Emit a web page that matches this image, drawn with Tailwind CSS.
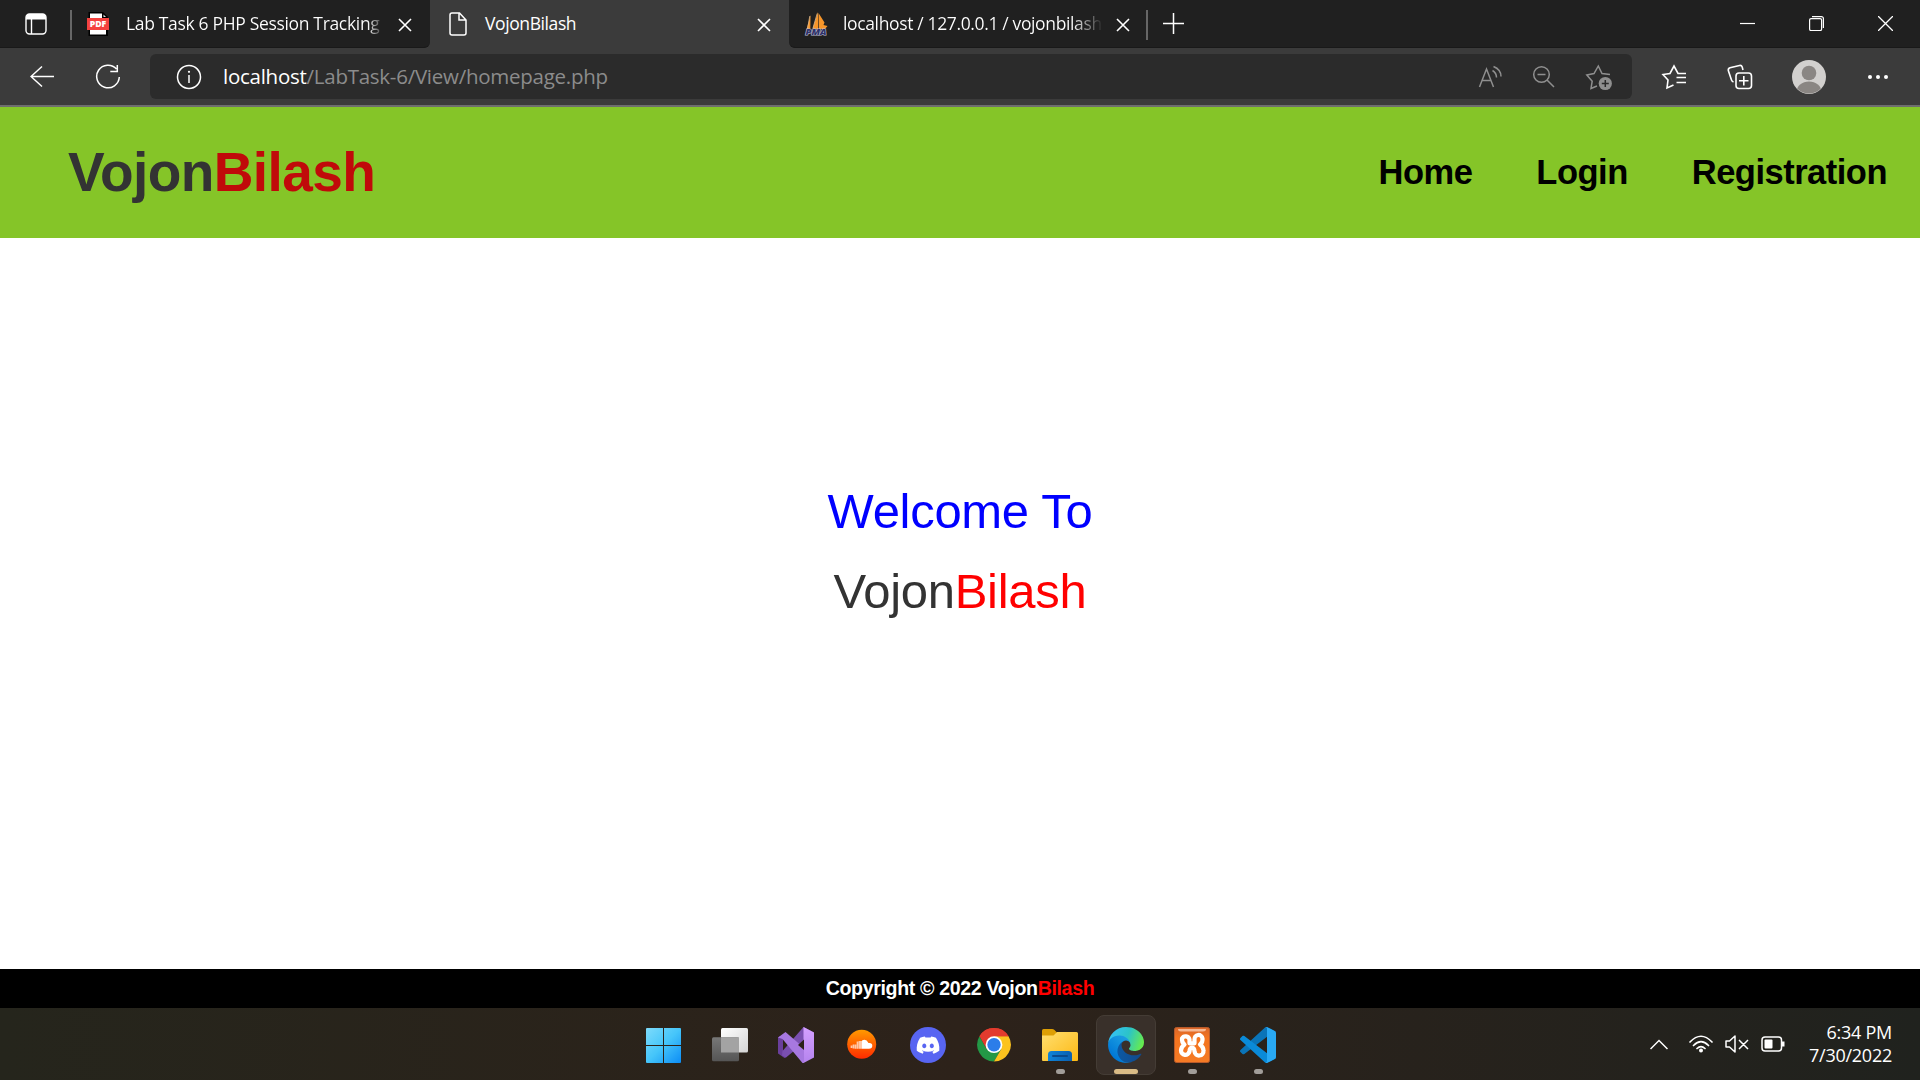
<!DOCTYPE html>
<html lang="en">
<head>
<meta charset="utf-8">
<title>VojonBilash</title>
<script src="https://cdn.jsdelivr.net/npm/@tailwindcss/browser@4"></script>
</head>
<body class="flex h-[1080px] w-[1920px] flex-col overflow-hidden bg-white font-['Liberation_Sans',Arial,sans-serif]">

<!-- Tab strip -->
<div class="flex h-12 shrink-0 bg-[#3b3b3b] font-['Open_Sans','Noto_Sans',sans-serif] text-white">
  <div class="flex h-12 w-[430px] items-center rounded-br-md border-b border-[#191919] bg-[#202020]">
    <svg class="ml-[25px] h-[22px] w-[22px]" viewBox="0 0 22 22" fill="none" stroke="#fff" stroke-width="1.4"><rect x="1" y="1" width="20" height="20" rx="3.5"/><path d="M1 4.5A3.5 3.5 0 0 1 4.500 1h13A3.500 3.500 0 0 1 21 4.500V6.500H1z" fill="#fff" stroke="none"/><path d="M6.500 6v15"/></svg>
    <div class="ml-[23px] mt-[3px] h-[30px] w-[2px] bg-[#666]"></div>
    <svg class="ml-[14px] h-6 w-6" viewBox="0 0 24 24"><path d="M2.500 0H17l5 5v19H2.500z" fill="#000"/><path d="M4 1.500h12V6h4v16.500H4z" fill="#fff"/><path d="M17.500 2.500v2.500H20z" fill="#ddd"/><rect x="1" y="6" width="22" height="12" fill="#f5423f"/><text x="12" y="15.200" text-anchor="middle" font-size="8.500" font-weight="800" fill="#fff" textLength="16.500" lengthAdjust="spacingAndGlyphs">PDF</text></svg>
    <div class="mb-[2px] ml-[16px] w-[260px] overflow-hidden whitespace-nowrap bg-linear-to-r from-white from-93% to-transparent to-99% bg-clip-text text-[17.5px] leading-6 tracking-[-0.33px] text-transparent">Lab Task 6 PHP Session Tracking V</div>
    <svg class="ml-[12px] mt-[2px] h-[14px] w-[14px]" viewBox="0 0 14 14" stroke="#fff" stroke-width="1.600"><path d="M1 1l12 12M13 1L1 13"/></svg>
  </div>
  <div class="flex w-[359px] items-center">
    <svg class="ml-[19px] h-6 w-[18px]" viewBox="0 0 18 24" fill="none" stroke="#fff" stroke-width="1.500"><path d="M1 3a2 2 0 0 1 2-2h7.500L17 8v13a2 2 0 0 1-2 2H3a2 2 0 0 1-2-2zM10 1v7h7"/></svg>
    <div class="mb-[2px] ml-[18px] w-[260px] whitespace-nowrap text-[17.5px] leading-6 tracking-[-0.4px]">VojonBilash</div>
    <svg class="ml-[12px] mt-[2px] h-[14px] w-[14px]" viewBox="0 0 14 14" stroke="#fff" stroke-width="1.600"><path d="M1 1l12 12M13 1L1 13"/></svg>
  </div>
  <div class="flex h-12 flex-1 items-center rounded-bl-md border-b border-[#191919] bg-[#202020]">
    <svg class="ml-[15px] h-6 w-6" viewBox="0 0 24 24"><path d="M6.500 3L2.500 17.500h3.800zM14 0L8.500 17h5.800zM14.500 1l6 9.500-1 2.500 4 1-2.500 3h-6z" fill="#f7962a"/><path d="M5.800 4L3.500 17M13.200 1.500L9 16" stroke="#e0b98a" stroke-width=".8" fill="none"/><text x="12" y="23" text-anchor="middle" font-size="8.500" font-style="italic" font-weight="800" fill="#2f3268" stroke="#b9bad0" stroke-width="1.200" paint-order="stroke" textLength="21" lengthAdjust="spacingAndGlyphs">PMA</text></svg>
    <div class="mb-[2px] ml-[15px] w-[260px] overflow-hidden whitespace-nowrap bg-linear-to-r from-white from-88% to-transparent to-100% bg-clip-text text-[17.5px] leading-6 tracking-[-0.36px] text-transparent">localhost / 127.0.0.1 / vojonbilash</div>
    <svg class="ml-[13px] mt-[2px] h-[14px] w-[14px]" viewBox="0 0 14 14" stroke="#fff" stroke-width="1.600"><path d="M1 1l12 12M13 1L1 13"/></svg>
    <div class="ml-[16px] mt-[3px] h-[30px] w-[2px] bg-[#666]"></div>
    <svg class="ml-[15px] h-[21px] w-[21px]" viewBox="0 0 21 21" stroke="#fff" stroke-width="1.500"><path d="M0 10.500h21M10.500 0v21"/></svg>
    <svg class="ml-auto h-[15px] w-[15px]" viewBox="0 0 15 15" stroke="#fff" stroke-width="1.200"><path d="M0 7.500h15"/></svg>
    <svg class="ml-[54px] h-[15px] w-[15px]" viewBox="0 0 15 15" fill="none" stroke="#fff" stroke-width="1.200"><rect x=".6" y="2.600" width="12" height="12" rx="1.500"/><path d="M3 .6h9.400a2 2 0 0 1 2 2v9.400"/></svg>
    <svg class="ml-[54px] mr-[27px] h-[15px] w-[15px]" viewBox="0 0 15 15" stroke="#fff" stroke-width="1.300"><path d="M0 0l15 15M15 0L0 15"/></svg>
  </div>
</div>

<!-- Toolbar -->
<div class="flex h-[59px] shrink-0 items-center border-b-2 border-[#6e6e6e] bg-[#3b3b3b] font-['Open_Sans','Noto_Sans',sans-serif]">
  <svg class="ml-[30px] h-6 w-6" viewBox="0 0 24 24" fill="none" stroke="#fff" stroke-width="1.500"><path d="M24 11.500H1M12 1.500L1 11.500l11 10"/></svg>
  <svg class="ml-[41px] h-[26px] w-[26px]" viewBox="0 0 26 26" fill="none" stroke="#fff" stroke-width="1.500"><path d="M21.500 5A11.300 11.300 0 1 0 24.300 13M22.300 1v6.500h-7"/></svg>
  <div class="ml-[29px] flex h-[45px] w-[1482px] items-center rounded-md bg-[#2b2b2b]">
    <svg class="ml-[26px] h-[26px] w-[26px]" viewBox="0 0 26 26" fill="none" stroke="#fff" stroke-width="1.500"><circle cx="13" cy="13" r="11.500"/><path d="M13 11v8"/><circle cx="13" cy="7.800" r="1.100" fill="#fff" stroke="none"/></svg>
    <div class="mb-[2px] ml-[21px] whitespace-nowrap text-[20.5px] leading-7 tracking-[-0.26px] text-[#8c8c8c]"><span class="text-white">localhost</span>/LabTask-6/View/homepage.php</div>
    <svg class="ml-auto h-6 w-6" viewBox="0 0 24 24" fill="none" stroke="#8f8f8f" stroke-width="1.500"><path d="M1.500 22L8.500 4l7 18M4 15.500h9M14.500 5.500q4 2.500 4 7M15.500 1.500q7.500 3 7.500 10"/></svg>
    <svg class="ml-[29px] h-6 w-6" viewBox="0 0 24 24" fill="none" stroke="#8f8f8f" stroke-width="1.500"><circle cx="10.500" cy="9.500" r="7.800"/><path d="M16 15l7 7M6.500 9.500h8"/></svg>
    <svg class="ml-[30px] mr-[19px] h-7 w-7" viewBox="0 0 28 28" fill="none" stroke="#8f8f8f" stroke-width="1.500"><path d="M12 23l-6 2.500 1.200-7.300L1.800 12l7.200-1.500L13.300 3l3.700 7.500 8 1"/><circle cx="20.300" cy="20.500" r="6.600" fill="#8f8f8f" stroke="none"/><path d="M20.300 17v7M16.800 20.500h7" stroke="#2b2b2b"/></svg>
  </div>
  <svg class="ml-[29px] h-[26px] w-[26px]" viewBox="0 0 26 26" fill="none" stroke="#fff" stroke-width="1.600"><path d="M12.500 21L6 24l1-8-5-5.500 7-1L13 2l4 7.500h8M15.500 13.500H25M15.500 18.500H25"/></svg>
  <svg class="ml-[40px] h-[26px] w-[26px]" viewBox="0 0 26 26" fill="none" stroke="#fff" stroke-width="1.600"><path d="M6.500 18q-1.500-.5-2-2L1.300 6.500Q1 4.500 3 3.800L12.500 1.500q2-.5 2.700 1.500l.8 3"/><rect x="9" y="9" width="15.500" height="15.500" rx="3"/><path d="M16.800 12v9.500M12 16.800h9.500"/></svg>
  <svg class="ml-[39px] h-[34px] w-[34px]" viewBox="0 0 34 34"><defs><clipPath id="av"><circle cx="17" cy="17" r="16.500"/></clipPath></defs><circle cx="17" cy="17" r="17" fill="#d2d0ce"/><circle cx="17" cy="13" r="7.300" fill="#8a8683"/><ellipse cx="17" cy="32" rx="12.500" ry="10.500" fill="#8a8683" clip-path="url(#av)"/></svg>
  <svg class="ml-[41px] h-5 w-[22px]" viewBox="0 0 22 20" fill="#fff"><circle cx="3" cy="10" r="2"/><circle cx="11" cy="10" r="2"/><circle cx="19" cy="10" r="2"/></svg>
</div>

<!-- Site header -->
<header class="flex h-[131px] shrink-0 items-center justify-between bg-[#85c528] pb-[2px] pl-[68px] pr-[33px] font-bold">
  <h1 class="text-[55px] leading-[60px] tracking-[-0.6px] text-[#333]">Vojon<span class="text-[#c00a0a]">Bilash</span></h1>
  <nav class="flex gap-[64px] text-[34.5px] leading-10 tracking-[-0.5px] text-black">
    <a>Home</a><a>Login</a><a>Registration</a>
  </nav>
</header>

<main class="flex flex-1 flex-col items-center pt-[233px] text-[49px] leading-[80px] tracking-[-0.3px]">
  <p class="text-[#00f]">Welcome To</p>
  <p class="text-[#333]">Vojon<span class="text-[#f00]">Bilash</span></p>
</main>

<footer class="flex h-[39px] shrink-0 items-center justify-center bg-black pb-[2px] text-[19.6px] font-bold leading-6 tracking-[-0.36px] text-white">
  <p>Copyright © 2022 Vojon<span class="text-[#f00]">Bilash</span></p>
</footer>

<!-- Taskbar -->
<div class="flex h-[72px] shrink-0 bg-linear-to-r from-[#25251c] via-[#2d221a] to-[#20221e] pl-[634px] font-['Open_Sans','Noto_Sans',sans-serif]">
  <div class="flex gap-1.5 pt-[7px]">
    <div class="flex h-[60px] w-[60px] flex-col items-center pt-3">
      <svg class="h-9 w-9" viewBox="0 0 36 36"><defs><linearGradient id="win" gradientUnits="userSpaceOnUse" x1="0" y1="0" x2="36" y2="36"><stop stop-color="#7fdcfb"/><stop offset=".5" stop-color="#45c5fa"/><stop offset="1" stop-color="#0a8bf5"/></linearGradient></defs><path d="M1 1h16v17H0V2a1 1 0 0 1 1-1zM18 1H34a1 1 0 0 1 1 1v16H18zM0 19h17v17H1a1 1 0 0 1-1-1zM18 19H35v16a1 1 0 0 1-1 1H18z" fill="url(#win)"/></svg>
    </div>
    <div class="flex h-[60px] w-[60px] flex-col items-center pt-3">
      <svg class="h-9 w-9" viewBox="0 0 36 36"><defs><linearGradient id="tv" x1="0" y1="0" x2="1" y2="1"><stop stop-color="#fff"/><stop offset="1" stop-color="#d4d4d4"/></linearGradient><linearGradient id="tg" x1="0" y1="0" x2="0" y2="1"><stop stop-color="#777"/><stop offset="1" stop-color="#555"/></linearGradient></defs><rect x="9" y="1" width="27" height="24.500" rx="1.500" fill="url(#tv)"/><rect y="10.300" width="27" height="24" rx="1.500" fill="url(#tg)"/><path d="M9 10.300h18v15.200H9z" fill="#a3a3a3"/></svg>
    </div>
    <div class="flex h-[60px] w-[60px] flex-col items-center pt-3">
      <svg class="h-9 w-9" viewBox="0 0 36 36"><defs><linearGradient id="vs" x1="0" y1="0" x2="0" y2="1"><stop stop-color="#d4a0ff"/><stop offset="1" stop-color="#b584ee"/></linearGradient></defs><path d="M0 10.300L5 8v19l3 3.500L6.500 31 0 26.500z" fill="#6a3f9c"/><path d="M25.500 0L36 5.500 28 14 8 30.500 4 28.500 4.500 24z" fill="#7a4fb0"/><path d="M25.500 0L36 5.500V30.500L25.500 36z" fill="url(#vs)"/><path d="M0 10.500L7.500 5 26 21v15h-1.500L4.500 12z" fill="#a778e0"/><path d="M26 12.500v10.500l-6-5z" fill="#2b2019"/></svg>
    </div>
    <div class="flex h-[60px] w-[60px] flex-col items-center pt-3">
      <svg class="h-9 w-9" viewBox="0 0 36 36"><defs><linearGradient id="sc" x1="0" y1="0" x2="0" y2="1"><stop stop-color="#ff9a00"/><stop offset="1" stop-color="#ff2a00"/></linearGradient></defs><circle cx="17.700" cy="17.300" r="14.500" fill="url(#sc)"/><path d="M18 13.500q4-2.300 6.500 2.500 3.800-.5 3.800 2.800 0 3-3.300 3H18z" fill="#fff"/><path d="M7.500 18.500v2.500M9.500 17.500v4M11.500 17.500v4.300M13.500 14.500v7.300M15.500 14v7.800M17.200 14v7.800" stroke="#ffc9a8" stroke-width="1.700"/></svg>
    </div>
    <div class="flex h-[60px] w-[60px] flex-col items-center pt-3">
      <svg class="h-9 w-9" viewBox="0 0 36 36"><circle cx="18" cy="18" r="18" fill="#5865f2"/><path transform="translate(6.700 6.700) scale(.945)" fill="#fff" d="M20.317 4.370a19.791 19.791 0 0 0-4.885-1.515.074.074 0 0 0-.079.037c-.211.375-.445.865-.608 1.250-1.845-.276-3.680-.276-5.487 0-.164-.393-.406-.874-.618-1.250a.077.077 0 0 0-.079-.037 19.736 19.736 0 0 0-4.885 1.515.070.070 0 0 0-.032.028C.533 9.046-.319 13.580.099 18.058a.082.082 0 0 0 .031.056c2.053 1.508 4.041 2.423 5.993 3.029a.078.078 0 0 0 .084-.028c.462-.630.873-1.295 1.226-1.994a.076.076 0 0 0-.042-.106c-.653-.248-1.274-.550-1.872-.892a.077.077 0 0 1-.008-.128c.126-.094.252-.192.372-.291a.074.074 0 0 1 .078-.011c3.928 1.793 8.180 1.793 12.061 0a.074.074 0 0 1 .079.010c.120.099.246.198.373.292a.077.077 0 0 1-.007.128 12.299 12.299 0 0 1-1.873.891.077.077 0 0 0-.041.107c.360.698.772 1.363 1.225 1.993a.076.076 0 0 0 .084.029c1.961-.607 3.950-1.522 6.002-3.029a.077.077 0 0 0 .031-.055c.500-5.177-.838-9.674-3.549-13.660a.061.061 0 0 0-.031-.029zM8.020 15.331c-1.183 0-2.157-1.086-2.157-2.419s.956-2.419 2.157-2.419c1.211 0 2.176 1.095 2.157 2.419 0 1.333-.956 2.419-2.157 2.419zm7.975 0c-1.183 0-2.157-1.086-2.157-2.419s.955-2.419 2.157-2.419c1.211 0 2.176 1.095 2.157 2.419 0 1.333-.946 2.419-2.157 2.419z"/></svg>
    </div>
    <div class="flex h-[60px] w-[60px] flex-col items-center pt-3">
      <svg class="h-9 w-9" viewBox="-18 -17.700 36 36"><path d="M0 0L-14.550-8.400A16.800 16.800 0 0 1 14.550-8.400z" fill="#e33b2e"/><path d="M-14.550-8.400A16.800 16.800 0 0 0 0 16.800L7.300 4.200-7.300 4.200z" fill="#239846"/><path d="M14.550-8.400A16.800 16.800 0 0 1 0 16.800L7.270 4.200 0-8.400z" fill="#fcc31e"/><path d="M0-8.400h14.550A16.800 16.800 0 0 0-14.550-8.400L-7.270 4.200z" fill="#e33b2e"/><circle r="8.400" fill="#fff"/><circle r="6.700" fill="#2b7de9"/></svg>
    </div>
    <div class="flex h-[60px] w-[60px] flex-col items-center pt-3">
      <svg class="h-9 w-9" viewBox="0 0 36 36"><defs><linearGradient id="fo" x1="0" y1="0" x2="1" y2="1"><stop stop-color="#ffdf70"/><stop offset="1" stop-color="#fdb813"/></linearGradient><linearGradient id="fb" x1="0" y1="0" x2="1" y2="0"><stop stop-color="#0f84d8"/><stop offset="1" stop-color="#0a5fb0"/></linearGradient></defs><path d="M0 3.500Q0 2 1.500 2H10q1.500 0 2.500 1L15 5.500V10H0z" fill="#dd9f05"/><path d="M0 8.500h11.500l3.500-3.500h19.500q1.500 0 1.500 1.500V33q0 1-1 1H1q-1 0-1-1z" fill="url(#fo)"/><path d="M6 34v-6.500q0-3.500 3.500-3.500h17q3.500 0 3.500 3.500V34z" fill="url(#fb)"/><path d="M11 29h14" stroke="#0a4a8c" stroke-width="2" stroke-linecap="round"/></svg>
      <div class="mt-1.5 h-[5px] w-[9px] rounded-full bg-[#a19d99]"></div>
    </div>
    <div class="flex h-[60px] w-[60px] flex-col items-center rounded-lg border border-[#443c35] bg-[#39302a] pt-[11px]">
      <svg class="h-9 w-9 shrink-0" viewBox="0 0 256 256"><defs><linearGradient id="e1" gradientUnits="userSpaceOnUse" x1="59" y1="177" x2="237" y2="177"><stop stop-color="#0c59a4"/><stop offset="1" stop-color="#114a8b"/></linearGradient><linearGradient id="e2" gradientUnits="userSpaceOnUse" x1="158" y1="96" x2="46" y2="218"><stop stop-color="#1b9de2"/><stop offset=".3" stop-color="#1595df"/><stop offset="1" stop-color="#0078d7"/></linearGradient><linearGradient id="e3" gradientUnits="userSpaceOnUse" x1="20" y1="50" x2="240" y2="130"><stop stop-color="#35c1f1"/><stop offset=".5" stop-color="#2bc3c9"/><stop offset="1" stop-color="#66eb4f"/></linearGradient></defs><path fill="url(#e1)" d="M231 190.500c-3.400 1.800-6.900 3.400-10.500 4.700a101.500 101.500 0 0 1-35.800 6.500c-47.200 0-88.300-32.500-88.300-74.100 0-11.700 6.400-22.600 16.600-28.400C70.300 101 59.300 145.500 59.300 171.500c0 73.700 68 81.100 82.500 81.100 7.900 0 19.800-2.300 26.900-4.600l1.300-.4a128.300 128.300 0 0 0 66.500-52.800c1-1.600.6-3.700-1-4.700-1.400-.9-3.100-.6-4.500.4z"/><path fill="url(#e2)" d="M105.700 241.400a79.200 79.200 0 0 1-22.700-21.300 80.700 80.700 0 0 1 29.500-120.900c3.100-1.500 8.500-4.100 15.600-4 10.100.1 19.700 4.900 25.800 13a32.500 32.500 0 0 1 6.400 18.700c0-.2 24.500-79.600-80-79.600C36.400 47.300.4 89 .4 125.500c-.2 19.300 4 38.500 12.100 56a128 128 0 0 0 156.400 67.100 75.600 75.600 0 0 1-63.100-7.200z"/><path fill="url(#e3)" d="M152.300 148.900c-.8 1-3.300 2.500-3.300 5.700 0 2.600 1.700 5.100 4.700 7.200 14.400 10 41.500 8.700 41.600 8.700 10.700 0 21.100-2.900 30.300-8.300a61.400 61.400 0 0 0 30.400-52.900c.3-22.400-8-37.300-11.300-43.900C223.500 23.900 177.700 0 128 0A128 128 0 0 0 0 126.200c.5-36.500 36.800-66 80-66 3.500 0 23.500.3 42 10.100 16.300 8.600 24.900 18.900 30.800 29.200 6.200 10.700 7.300 24.100 7.300 29.500 0 5.300-2.700 13.300-7.800 19.900z"/></svg>
      <div class="mt-1.5 h-[5px] w-6 shrink-0 rounded-full bg-[#d9bb86]"></div>
    </div>
    <div class="flex h-[60px] w-[60px] flex-col items-center pt-3">
      <svg class="h-9 w-9" viewBox="0 0 36 36"><defs><linearGradient id="xa" x1="0" y1="0" x2="0" y2="1"><stop stop-color="#d9662a"/><stop offset=".3" stop-color="#f4741f"/><stop offset="1" stop-color="#f57b25"/></linearGradient></defs><rect x=".5" y=".5" width="35" height="35" rx="2" fill="url(#xa)" stroke="#b85a2a"/><path d="M4 2h28q0 2.500-3 2.500H7Q4 4.500 4 2z" fill="#f6b893"/><path d="M18 16.300H15.500V12.500A4 4 0 0 0 8 11.500Q7.500 15 10.500 17.500Q7 20 7 23.500A4.300 4.300 0 0 0 15.500 24.500Q15.500 20.800 18 20.800T20.500 24.500A4.300 4.300 0 0 0 29.500 23.500Q29.500 20 26 17.500Q29 15 28.500 11.500A4 4 0 0 0 20.500 12.500V16.300z" fill="none" stroke="#fff" stroke-width="4.200" stroke-linejoin="round"/></svg>
      <div class="mt-1.5 h-[5px] w-[9px] rounded-full bg-[#a19d99]"></div>
    </div>
    <div class="flex h-[60px] w-[60px] flex-col items-center pt-3">
      <svg class="h-9 w-9" viewBox="0 0 100 100"><path fill="#0a74b8" d="M96.461 10.796L75.857.876C73.472-.273 70.622.212 68.750 2.083L1.299 63.583c-1.815 1.654-1.812 4.511.004 6.162l5.510 5.009c1.485 1.350 3.722 1.450 5.321.237L93.361 13.370C96.086 11.303 100 13.246 100 16.667v-.239c0-2.401-1.375-4.590-3.539-5.632z"/><path fill="#0a8ad8" d="M96.461 89.204l-20.604 9.921c-2.385 1.148-5.235.664-7.107-1.208L1.299 36.417c-1.815-1.654-1.812-4.511.004-6.162l5.510-5.009c1.485-1.350 3.722-1.450 5.321-.237L93.361 86.630C96.086 88.697 100 86.754 100 83.333v.240c0 2.401-1.375 4.589-3.539 5.631z"/><path fill="#29a9f4" d="M75.858 99.126c-2.386 1.148-5.236.663-7.108-1.209C71.056 100.223 75 98.590 75 95.328V4.672C75 1.410 71.056-.223 68.750 2.083c1.872-1.872 4.722-2.357 7.108-1.209l20.601 9.907c2.164 1.041 3.541 3.230 3.541 5.632v67.174c0 2.402-1.377 4.592-3.541 5.633z"/></svg>
      <div class="mt-1.5 h-[5px] w-[9px] rounded-full bg-[#a19d99]"></div>
    </div>
  </div>
  <div class="ml-auto flex items-center pr-[28px] text-white">
    <svg class="h-[11px] w-[18px]" viewBox="0 0 18 11" fill="none" stroke="#fff" stroke-width="1.500"><path d="M.5 10L9 1.500 17.500 10"/></svg>
    <svg class="ml-[21px] h-6 w-6" viewBox="0 0 24 24" fill="none" stroke="#fff" stroke-width="1.700" stroke-linecap="round"><path d="M1 10Q12-1.500 23 10M4.500 13.500q7.500-7.500 15 0M8 16.500q4-4 8 0"/><circle cx="12" cy="18.500" r="2" fill="#fff" stroke="none"/></svg>
    <svg class="ml-3 h-6 w-6" viewBox="0 0 24 24" fill="none" stroke="#fff" stroke-width="1.500" stroke-linejoin="round"><path d="M1 9h3.500l5.500-5v16l-5.500-5H1zM14 8l9 9M23 8l-9 9"/></svg>
    <svg class="ml-3 h-6 w-6" viewBox="0 0 24 24" fill="none" stroke="#fff" stroke-width="1.500"><rect x="1" y="5" width="19.500" height="14" rx="3"/><rect x="3.500" y="7.500" width="8" height="9" rx="1" fill="#fff" stroke="none"/><path d="M22 9.500v5" stroke-width="3"/></svg>
    <div class="ml-[21px] w-[86px] whitespace-nowrap text-right text-[18px] leading-[23px] tracking-[-0.25px]"><div>6:34 PM</div><div>7/30/2022</div></div>
  </div>
</div>
</body>
</html>
